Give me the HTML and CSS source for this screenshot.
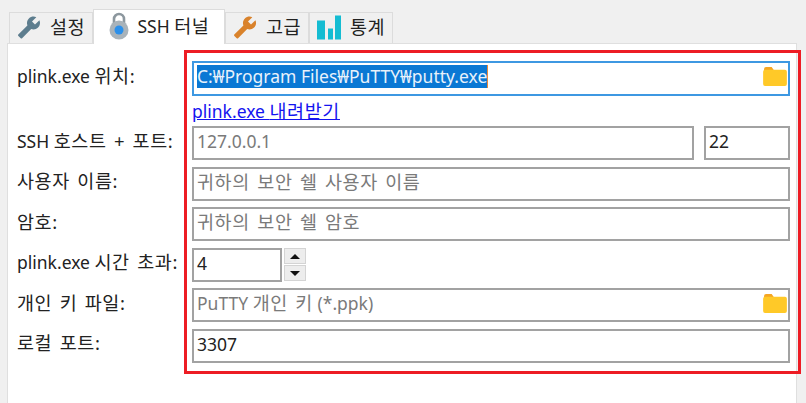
FILE: index.html
```html
<!DOCTYPE html>
<html lang="ko">
<head>
    <meta charset="UTF-8">
    <title>SSH 터널</title>
    <link rel="stylesheet" href="styles.css">
</head>
<body>
    <div class="tabs">
        <div class="tab">
            <svg class="tab-icon" viewBox="0 0 24 24"><path class="wrench-gray" d="M1.3 19l9.1-9.1c-.9-2.3-.4-5 1.5-6.9 2-2 5-2.4 7.4-1.3L15 6l3 3 4.4-4.3c1.2 2.4.7 5.4-1.3 7.4-1.9 1.9-4.6 2.4-6.9 1.5l-9.1 9.1c-.4.4-1 .4-1.4 0l-2.3-2.3c-.5-.4-.5-1.1-.1-1.4z"/></svg>
            <span class="ko">설정</span>
        </div>
        <div class="tab active">
            <svg class="tab-icon lock" viewBox="0 0 20 28">
                <path d="M5 13V7a5 5 0 0 1 10 0v6" fill="none" stroke="#8c979e" stroke-width="2.6"/>
                <circle cx="10" cy="18" r="9.5" fill="#a9b3ba"/>
                <circle cx="10" cy="18" r="4.5" fill="#2c90ea"/>
            </svg>
            <span>SSH <span class="ko">터널</span></span>
        </div>
        <div class="tab">
            <svg class="tab-icon" viewBox="0 0 24 24"><path class="wrench-orange" d="M1.3 19l9.1-9.1c-.9-2.3-.4-5 1.5-6.9 2-2 5-2.4 7.4-1.3L15 6l3 3 4.4-4.3c1.2 2.4.7 5.4-1.3 7.4-1.9 1.9-4.6 2.4-6.9 1.5l-9.1 9.1c-.4.4-1 .4-1.4 0l-2.3-2.3c-.5-.4-.5-1.1-.1-1.4z"/></svg>
            <span class="ko">고급</span>
        </div>
        <div class="tab">
            <svg class="tab-icon bars" viewBox="0 0 24 24">
                <rect x="0" y="5" width="8" height="19"/>
                <rect x="11" y="13" width="5" height="11"/>
                <rect x="18" y="0" width="6" height="24"/>
            </svg>
            <span class="ko">통계</span>
        </div>
    </div>

    <div class="panel">
        <div class="row row-path">
            <label>plink.exe <span class="ko">위치:</span></label>
            <div class="field focused">
                <span class="selected">C:₩Program Files₩PuTTY₩putty.exe</span>
                <svg class="folder" viewBox="0 0 25 20"><use href="#folder-shape"/></svg>
            </div>
        </div>
        <div class="row row-link">
            <span></span>
            <div class="link-wrap"><a href="#">plink.exe <span class="ko">내려받기</span></a></div>
        </div>
        <div class="row">
            <label>SSH <span class="ko">호스트 + 포트:</span></label>
            <div class="host-port">
                <div class="field placeholder">127.0.0.1</div>
                <div class="field port">22</div>
            </div>
        </div>
        <div class="row">
            <label class="ko">사용자 이름:</label>
            <div class="field placeholder ko">귀하의 보안 쉘 사용자 이름</div>
        </div>
        <div class="row">
            <label class="ko">암호:</label>
            <div class="field placeholder ko">귀하의 보안 쉘 암호</div>
        </div>
        <div class="row">
            <label>plink.exe <span class="ko">시간 초과:</span></label>
            <div class="spinner">
                <div class="field spin-value">4</div>
                <div class="spin-buttons">
                    <div class="spin-btn"><span class="arrow-up"></span></div>
                    <div class="spin-btn"><span class="arrow-down"></span></div>
                </div>
            </div>
        </div>
        <div class="row">
            <label class="ko">개인 키 파일:</label>
            <div class="field placeholder">
                <span>PuTTY <span class="ko">개인 키</span> (*.ppk)</span>
                <svg class="folder" viewBox="0 0 25 20"><use href="#folder-shape"/></svg>
            </div>
        </div>
        <div class="row">
            <label class="ko">로컬 포트:</label>
            <div class="field">3307</div>
        </div>
    </div>

    <!-- red annotation box drawn over the form -->
    <div class="highlight"></div>

    <svg class="defs" width="0" height="0">
        <defs>
            <g id="folder-shape">
                <path d="M1 5V2a2 2 0 0 1 2-2h6l2 3v3z" fill="#f5a623"/>
                <rect x="0" y="3" width="25" height="17" rx="2" fill="#ffc928"/>
            </g>
        </defs>
    </svg>
</body>
</html>
```

FILE: styles.css
```css
* {
    box-sizing: border-box;
}
html, body {
    height: 100%;
}
body {
    margin: 0;
    overflow: hidden;
    background-color: #f0f0f0;
    color: #222;
    font-family: "Noto Sans", "Noto Sans CJK KR", sans-serif;
    font-size: 17.5px;
    line-height: 22px;
    display: flex;
    flex-direction: column;
}
.ko {
    font-size: 18.5px;
    letter-spacing: 0.6px;
    word-spacing: 2px;
}
.tabs {
    display: flex;
    align-items: flex-end;
    height: 43px;
    padding-left: 9px;
}
.tab {
    display: flex;
    align-items: center;
    justify-content: center;
    gap: 9px;
    width: 84px;
    height: 31px;
    padding-bottom: 2px;
    border: 1px solid #dcdcdc;
    border-bottom: 0;
    background-color: #f0f0f0;
}
.tab.active {
    width: 132px;
    height: 35px;
    margin-bottom: -1px;
    background-color: #fff;
    position: relative;
    z-index: 1;
}
.tab-icon {
    width: 24px;
    height: 25px;
    flex: none;
}
.lock {
    width: 20px;
    height: 28px;
}
.wrench-gray {
    fill: #5d7d8e;
}
.wrench-orange {
    fill: #d9822b;
}
.bars {
    fill: #14bcd2;
}
.panel {
    flex: 1;
    margin: 0 9px 0 7px;
    padding: 17px 6px 0 9px;
    background-color: #fff;
    border: 1px solid #dfdfdf;
    border-bottom: 0;
}
.row {
    display: grid;
    grid-template-columns: 175px 1fr;
    align-items: center;
    margin-bottom: 6.5px;
}
.row-path {
    margin-bottom: 4px;
}
.row-link {
    height: 23px;
    margin-bottom: 3px;
}
.link-wrap {
    margin-top: -2px;
}
.row-link a {
    color: #1414f0;
    line-height: 23px;
}
label {
    white-space: nowrap;
    margin-top: -5px;
}
.field {
    display: flex;
    align-items: center;
    justify-content: space-between;
    height: 34px;
    padding: 0 3px 4px;
    background-color: #fff;
    border: 2px solid #a2a2a2;
    white-space: nowrap;
}
.focused {
    height: 35px;
    border-color: #3d98e2;
}
.selected {
    display: block;
    line-height: 23px;
    background-color: #0a78d4;
    border-right: 1px solid #e8893a;
    color: #e8f2fb;
}
.placeholder {
    color: #7a7a7a;
}
.folder {
    width: 24px;
    height: 19px;
    flex: none;
    margin-right: -2px;
}
.host-port {
    display: flex;
    gap: 10px;
}
.host-port .placeholder {
    flex: 1;
}
.port {
    width: 86px;
}
.spinner {
    display: flex;
    align-items: center;
    gap: 2px;
}
.spin-value {
    width: 90px;
}
.spin-buttons {
    display: flex;
    flex-direction: column;
    gap: 1px;
}
.spin-btn {
    display: flex;
    align-items: center;
    justify-content: center;
    width: 22px;
    height: 16px;
    background-color: #ededed;
    border: 1px solid #d4d4d4;
}
.arrow-up, .arrow-down {
    width: 0;
    height: 0;
    border-left: 5px solid transparent;
    border-right: 5px solid transparent;
}
.arrow-up {
    border-bottom: 5px solid #111;
}
.arrow-down {
    border-top: 5px solid #111;
}
.highlight {
    position: absolute;
    left: 184px;
    top: 50px;
    width: 617px;
    height: 324px;
    border: 3px solid #ed1c24;
    pointer-events: none;
}
.defs {
    position: absolute;
}
```
